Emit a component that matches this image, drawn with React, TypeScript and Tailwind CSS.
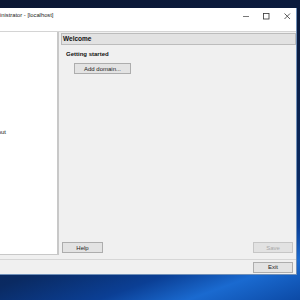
import React from "react"

function Btn({ label, disabled, className }: { label: string; disabled?: boolean; className: string }) {
    return (
        <div
            className={
                "flex items-center justify-center border text-[6px] leading-none " +
                (disabled ? "border-[#c6c6c6] bg-[#e2e2e2] text-[#a8a8a8] " : "border-[#adadad] bg-[#e3e3e3] text-[#222] ") +
                className
            }
        >
            {label}
        </div>
    )
}

export default function App() {
    return (
        <div
            className="w-[300px] h-[300px] overflow-hidden bg-[linear-gradient(160deg,#0b1733_0%,#0b1d42_40%,#0a2a62_70%,#0b3f95_82%,#1a6ad0_90%,#0c4aa6_100%)]"
            style={{ fontFamily: '"Liberation Sans", Arial, sans-serif' }}
        >
            <div className="h-[8px]" />
            <div className="w-[297px] h-[267px] bg-[#f0f0f0] border-r border-b border-[#6f8fb8] flex flex-col">
                {/* title bar */}
                <div className="h-[24px] bg-white flex items-start justify-between border-b border-[#d4d4d4]">
                    <p className="text-[5.8px] leading-none text-[#222] pt-[5px] whitespace-nowrap">inistrator - [localhost]</p>
                    <div className="flex items-start pt-[4px]">
                        <svg width="8" height="8" viewBox="0 0 8 8" className="mr-[12px]">
                            <line x1="1" y1="4.5" x2="7" y2="4.5" stroke="#555" strokeWidth="0.8" />
                        </svg>
                        <svg width="8" height="8" viewBox="0 0 8 8" className="mr-[13px]">
                            <rect x="1.5" y="1.5" width="5.5" height="5.5" fill="none" stroke="#333" strokeWidth="0.8" />
                        </svg>
                        <svg width="8" height="8" viewBox="0 0 8 8" className="mr-[5px]">
                            <path d="M1.5 1.5 L7 7 M7 1.5 L1.5 7" stroke="#333" strokeWidth="0.8" />
                        </svg>
                    </div>
                </div>

                {/* main area */}
                <div className="flex-1 flex min-h-0">
                    <div className="w-[59px] mb-[4px] bg-white border-r-2 border-b border-[#c8c8c8] pt-[96px] overflow-hidden">
                        <p className="text-[6px] leading-[8px] text-[#222] whitespace-nowrap ml-[-12px]">Layout</p>
                        <p className="text-[6px] leading-[8px] text-[#222] whitespace-nowrap ml-[-17px]">Tools</p>
                    </div>
                    <div className="flex-1 flex flex-col pl-[2px] pt-[1px]">
                        <div className="h-[12px] border border-[#bcbcbc] bg-[#e2e2e2] flex items-center pl-[1px]">
                            <p className="text-[6.5px] font-bold leading-none text-[#111]">Welcome</p>
                        </div>
                        <div className="pl-[5px] pt-[6px] flex flex-col">
                            <p className="text-[6px] font-bold leading-none text-[#111]">Getting started</p>
                            <Btn label="Add domain..." className="w-[57px] h-[11px] ml-[8px] mt-[6px]" />
                        </div>
                        <div className="flex-1" />
                        <div className="flex justify-between pl-[1px] pr-[3px] mb-[6px]">
                            <Btn label="Help" className="w-[41px] h-[11px]" />
                            <Btn label="Save" disabled className="w-[40px] h-[11px]" />
                        </div>
                    </div>
                </div>

                {/* bottom row */}
                <div className="h-[15px] border-t border-[#d6d6d6] flex items-center justify-end pr-[3px]">
                    <Btn label="Exit" className="w-[40px] h-[11px]" />
                </div>
            </div>
        </div>
    )
}
